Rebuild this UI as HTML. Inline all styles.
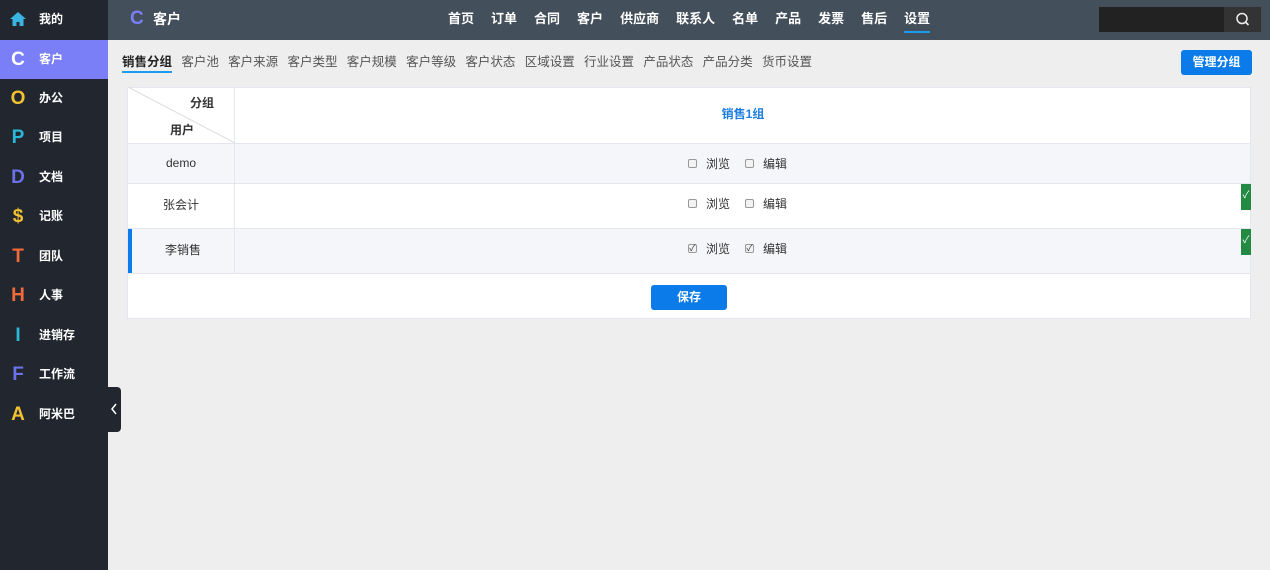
<!DOCTYPE html>
<html><head><meta charset="utf-8"><style>
*{margin:0;padding:0;box-sizing:border-box}
body{width:1270px;height:570px;overflow:hidden;background:#eeeeee;font-family:"Liberation Sans","Noto Sans CJK SC",sans-serif;position:relative}
.side{position:absolute;left:0;top:0;width:108px;height:570px;background:#22272f}
.si{position:absolute;left:0;width:108px;height:40px;color:#fff;font-size:12px;font-weight:bold}
.si .ic{position:absolute;left:9px;top:10px;width:18px;text-align:center;font-size:19px;font-weight:bold;line-height:20px}
.si .t{position:absolute;left:39px;top:12px;line-height:14px}
.top{position:absolute;left:108px;top:0;width:1162px;height:40px;background:#434f5a}
.nav{position:absolute;left:448px;top:0;display:flex;gap:17px;color:#fff;font-size:13px;font-weight:bold;line-height:38px}
.nav span{position:relative}
.tabs{position:absolute;left:122px;top:53px;display:flex;gap:9.3px;font-size:12.5px;color:#555;line-height:18px}
.tbl{position:absolute;left:127px;top:87px;width:1124px;height:232px;background:#fff;border:1px solid #e4e7ee}
.row{position:absolute;left:0;width:1122px;border-top:1px solid #e4e7ee}
.c1{position:absolute;left:0;top:0;bottom:0;width:107px;border-right:1px solid #e4e7ee;text-align:center;font-size:12px;color:#333}
.cb{position:absolute;left:560px;font-size:12px;color:#333;display:flex;align-items:center;gap:9px}
.box{width:9px;height:9px;border:1px solid #999;border-radius:2px;background:#f3f3f3;font-size:9px;line-height:7px;text-align:center;color:#333}
.g{position:absolute;left:1241px;width:10px;height:26px;background:#228a42;color:#fff;font-size:10px;text-align:center;line-height:24px}
</style></head><body>
<div class="side">
<div class="si" style="top:0"><div class="ic" style="top:11px"><svg width="18" height="16" viewBox="0 0 18 16"><path d="M9 1L1 8h2.5v7h4v-4h3v4h4V8H17z" fill="#3ab4e0"/></svg></div><div class="t">我的</div></div>
<div class="si" style="top:40px;height:39px;background:#7a7ff8"><div class="ic">C</div><div class="t">客户</div></div>
<div class="si" style="top:79px"><div class="ic" style="color:#f2c230">O</div><div class="t">办公</div></div>
<div class="si" style="top:118px"><div class="ic" style="color:#2ab8d8">P</div><div class="t">项目</div></div>
<div class="si" style="top:158px"><div class="ic" style="color:#6b72e8">D</div><div class="t">文档</div></div>
<div class="si" style="top:197px"><div class="ic" style="color:#f2c230">$</div><div class="t">记账</div></div>
<div class="si" style="top:237px"><div class="ic" style="color:#f06a3a">T</div><div class="t">团队</div></div>
<div class="si" style="top:276px"><div class="ic" style="color:#f06a3a">H</div><div class="t">人事</div></div>
<div class="si" style="top:316px"><div class="ic" style="color:#2ab8d8">I</div><div class="t">进销存</div></div>
<div class="si" style="top:355px"><div class="ic" style="color:#6b72e8">F</div><div class="t">工作流</div></div>
<div class="si" style="top:395px"><div class="ic" style="color:#f2c230">A</div><div class="t">阿米巴</div></div>
</div>
<div style="position:absolute;left:108px;top:387px;width:13px;height:45px;background:#22272f;border-radius:0 4px 4px 0"><svg width="13" height="45"><path d="M8 17l-4 5 4 5" fill="none" stroke="#fff" stroke-width="1.5"/></svg></div>
<div class="top">
<div style="position:absolute;left:22px;top:9px;color:#7a7ff8;font-size:19px;font-weight:bold;line-height:20px">C</div>
<div style="position:absolute;left:45px;top:10px;color:#fff;font-size:14px;font-weight:bold;line-height:18px">客户</div>
</div>
<div class="nav" style="left:448px"><span>首页</span><span>订单</span><span>合同</span><span>客户</span><span>供应商</span><span>联系人</span><span>名单</span><span>产品</span><span>发票</span><span>售后</span><span>设置<i style="position:absolute;left:0;right:0;top:31px;height:2px;background:#1a9cf0"></i></span></div>
<div style="position:absolute;left:1099px;top:7px;width:125px;height:25px;background:#222"></div>
<div style="position:absolute;left:1224px;top:7px;width:37px;height:25px;background:#333"><svg width="37" height="25"><circle cx="18" cy="11.5" r="5" fill="none" stroke="#eee" stroke-width="1.5"/><path d="M21.5 15l3 3" stroke="#eee" stroke-width="1.6"/></svg></div>
<div class="tabs"><span style="font-weight:bold;color:#222;position:relative">销售分组<i style="position:absolute;left:0;right:0;top:18px;height:2px;background:#1a9cf0"></i></span><span>客户池</span><span>客户来源</span><span>客户类型</span><span>客户规模</span><span>客户等级</span><span>客户状态</span><span>区域设置</span><span>行业设置</span><span>产品状态</span><span>产品分类</span><span>货币设置</span></div>
<div style="position:absolute;left:1181px;top:50px;width:71px;height:25px;background:#0a7be8;border-radius:3px;color:#fff;font-size:12px;font-weight:bold;text-align:center;line-height:25px">管理分组</div>
<div class="tbl">
<div class="row" style="top:-1px;height:57px;border-top:none">
<div class="c1" style="font-weight:bold"><svg width="107" height="56" style="position:absolute;left:0;top:0"><line x1="0" y1="0" x2="107" y2="56" stroke="#ddd"/></svg><span style="position:absolute;right:20px;top:7px">分组</span><span style="position:absolute;left:42px;top:34px">用户</span></div>
<div style="position:absolute;left:108px;right:0;top:0;height:56px;text-align:center;line-height:54px;color:#1a7be0;font-size:12px;font-weight:bold">销售1组</div>
</div>
<div class="row" style="top:55px;height:40px;background:#f5f6f9"><div class="c1" style="line-height:38px">demo</div><div class="cb" style="top:11px"><span class="box"></span>浏览<span class="box" style="margin-left:6px"></span>编辑</div></div>
<div class="row" style="top:95px;height:45px"><div class="c1" style="line-height:42px">张会计</div><div class="cb" style="top:11px"><span class="box"></span>浏览<span class="box" style="margin-left:6px"></span>编辑</div></div>
<div class="row" style="top:140px;height:45px;background:#f5f6f9"><div class="c1" style="line-height:42px;border-left:4px solid #0a7be8">李销售</div><div class="cb" style="top:11px"><span class="box">✓</span>浏览<span class="box" style="margin-left:6px">✓</span>编辑</div></div>
<div class="row" style="top:185px;height:46px"><div style="position:absolute;left:523px;top:11px;width:76px;height:25px;background:#0a7be8;border-radius:3px;color:#fff;font-size:12px;font-weight:bold;text-align:center;line-height:25px">保存</div></div>
</div>
<div class="g" style="top:184px">✓</div>
<div class="g" style="top:229px">✓</div>
</body></html>
